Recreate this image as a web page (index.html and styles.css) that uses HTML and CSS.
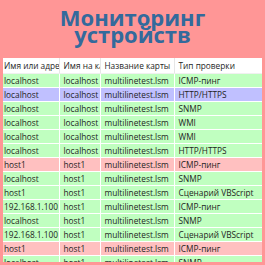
FILE: index.html
```html
<!DOCTYPE html>
<html lang="ru">
<head>
<meta charset="utf-8">
<link rel="stylesheet" href="styles.css">
</head>
<body>
<div class="page">
  <h1 class="title"><span class="tline">Мониторинг</span><span class="tline">устройств</span></h1>
  <div class="grid-wrap">
    <table class="grid">
      <colgroup>
        <col class="c1"><col class="c2"><col class="c3"><col class="c4">
      </colgroup>
      <thead>
        <tr class="head"><th>Имя или адрес</th><th>Имя на карте</th><th>Название карты</th><th>Тип проверки</th></tr>
      </thead>
      <tbody>
        <tr class="ok"><td>localhost</td><td>localhost</td><td>multilinetest.lsm</td><td>ICMP-пинг</td></tr>
        <tr class="sel"><td>localhost</td><td>localhost</td><td>multilinetest.lsm</td><td>HTTP/HTTPS</td></tr>
        <tr class="ok"><td>localhost</td><td>localhost</td><td>multilinetest.lsm</td><td>SNMP</td></tr>
        <tr class="ok"><td>localhost</td><td>localhost</td><td>multilinetest.lsm</td><td>WMI</td></tr>
        <tr class="ok"><td>localhost</td><td>localhost</td><td>multilinetest.lsm</td><td>WMI</td></tr>
        <tr class="ok"><td>localhost</td><td>localhost</td><td>multilinetest.lsm</td><td>HTTP/HTTPS</td></tr>
        <tr class="bad"><td>host1</td><td>host1</td><td>multilinetest.lsm</td><td>ICMP-пинг</td></tr>
        <tr class="ok"><td>localhost</td><td>host1</td><td>multilinetest.lsm</td><td>SNMP</td></tr>
        <tr class="ok"><td>host1</td><td>host1</td><td>multilinetest.lsm</td><td>Сценарий VBScript</td></tr>
        <tr class="ok"><td>192.168.1.100</td><td>host1</td><td>multilinetest.lsm</td><td>ICMP-пинг</td></tr>
        <tr class="ok"><td>localhost</td><td>host1</td><td>multilinetest.lsm</td><td>SNMP</td></tr>
        <tr class="ok"><td>192.168.1.100</td><td>host1</td><td>multilinetest.lsm</td><td>Сценарий VBScript</td></tr>
        <tr class="bad"><td>host1</td><td>host1</td><td>multilinetest.lsm</td><td>ICMP-пинг</td></tr>
        <tr class="ok"><td>localhost</td><td>host1</td><td>multilinetest.lsm</td><td>SNMP</td></tr>
      </tbody>
    </table>
  </div>
</div>
</body>
</html>
```

FILE: styles.css
```css
html, body {
  margin: 0;
  padding: 0;
  background: #ff9696;
}
.page {
  width: 265px;
  height: 265px;
  box-sizing: border-box;
  padding: 0 3px 3px 3px;
  display: flex;
  flex-direction: column;
  overflow: hidden;
}
.title {
  margin: 0;
  height: 58px;
  box-sizing: border-box;
  padding-top: 9px;
  font-family: "Open Sans", "DejaVu Sans", sans-serif;
  font-weight: 700;
  font-size: 22px;
  line-height: 17px;
  color: #336a9c;
  text-align: center;
  display: flex;
  flex-direction: column;
  align-items: center;
}
.tline {
  display: block;
  height: 17px;
}
.grid-wrap {
  flex: 1;
  overflow: hidden;
  background: #fff;
}
.grid {
  table-layout: fixed;
  border-collapse: collapse;
  width: 259px;
  font-family: "Open Sans", "DejaVu Sans", sans-serif;
  font-size: 8.3px;
  color: #1e1e1e;
}
.c1 { width: 56px; }
.c2 { width: 41px; }
.c3 { width: 74px; }
.c4 { width: 88px; }
.grid th, .grid td {
  padding: 0 0 0 4px;
  white-space: nowrap;
  overflow: hidden;
  text-align: left;
  font-weight: 400;
  border-right: 1px solid rgba(255,255,255,0.55);
  border-bottom: 1px solid rgba(255,255,255,0.45);
  height: 13px;
  line-height: 13px;
}
.grid th:first-child, .grid td:first-child {
  padding-left: 1px;
}
.grid .head th {
  height: 15px;
  line-height: 15px;
  background: #fff;
  border-right: 1px solid #e6e6e6;
  border-bottom: 1px solid #f0f0f0;
}
.ok { background: #c0ffc0; }
.sel { background: #c0c0ff; }
.bad { background: #ffc0c0; }
```
